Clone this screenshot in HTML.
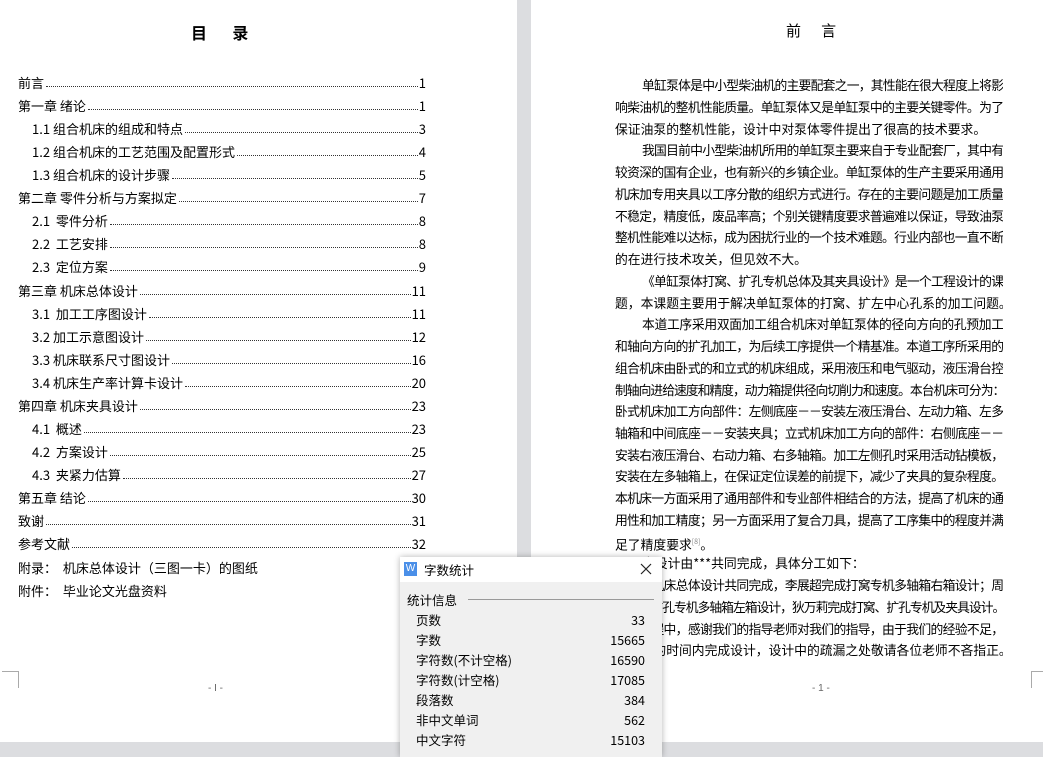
<!DOCTYPE html>
<html><head><meta charset="utf-8">
<style>
*{margin:0;padding:0;box-sizing:border-box}
body{width:1043px;height:757px;overflow:hidden;background:#dcdde0;position:relative;font-family:"Liberation Sans","Noto Sans CJK SC","WenQuanYi Zen Hei",sans-serif;color:#000}
.page{position:absolute;background:#fff;top:0;height:742px}
.t{position:absolute;white-space:nowrap}
.toc{position:absolute;left:18px;width:408px;display:flex;align-items:flex-end;font-size:13px;height:16px;line-height:16px;font-family:"Noto Sans CJK SC","WenQuanYi Zen Hei",sans-serif;white-space:nowrap}
.toc .d{flex:1;border-bottom:1px dotted #333;margin:0 1px 4px 2px}
.toc.s{left:32px;width:394px}
.ln{position:absolute;left:615px;width:388px;font-size:12.8px;letter-spacing:-1px;height:18px;line-height:18px;text-align:justify;text-align-last:justify;white-space:nowrap;overflow:hidden;font-family:"Noto Sans CJK SC","WenQuanYi Zen Hei",sans-serif}
.ln.l{text-align-last:left;letter-spacing:0}
.ln.i{padding-left:27px}
.dlg{position:absolute;left:400px;top:557px;width:262px;height:200px;background:#f0f0f0;box-shadow:0 0 6px rgba(0,0,0,.3);font-size:12.5px;font-family:"Noto Sans CJK SC","WenQuanYi Zen Hei",sans-serif}
.row{position:absolute;left:16px;width:229px;display:flex;justify-content:space-between;height:18px;line-height:18px}
</style></head><body>
<div class="page" style="left:0;width:517px"></div>
<div class="page" style="left:531px;width:512px"></div>

<div class="t" style="left:191px;top:20px;font-size:16px;font-weight:bold;font-family:'Noto Sans CJK SC',sans-serif">目&nbsp;&nbsp;&nbsp;&nbsp;&nbsp;&nbsp;&nbsp;录</div>

<div class="toc" style="top:75px"><span>前言</span><span class="d"></span><span>1</span></div>
<div class="toc" style="top:98px"><span>第一章 绪论</span><span class="d"></span><span>1</span></div>
<div class="toc s" style="top:121px"><span>1.1 组合机床的组成和特点</span><span class="d"></span><span>3</span></div>
<div class="toc s" style="top:144px"><span>1.2 组合机床的工艺范围及配置形式</span><span class="d"></span><span>4</span></div>
<div class="toc s" style="top:167px"><span>1.3 组合机床的设计步骤</span><span class="d"></span><span>5</span></div>
<div class="toc" style="top:190px"><span>第二章 零件分析与方案拟定</span><span class="d"></span><span>7</span></div>
<div class="toc s" style="top:213px"><span>2.1&nbsp; 零件分析</span><span class="d"></span><span>8</span></div>
<div class="toc s" style="top:236px"><span>2.2&nbsp; 工艺安排</span><span class="d"></span><span>8</span></div>
<div class="toc s" style="top:259px"><span>2.3&nbsp; 定位方案</span><span class="d"></span><span>9</span></div>
<div class="toc" style="top:283px"><span>第三章 机床总体设计</span><span class="d"></span><span>11</span></div>
<div class="toc s" style="top:306px"><span>3.1&nbsp; 加工工序图设计</span><span class="d"></span><span>11</span></div>
<div class="toc s" style="top:329px"><span>3.2 加工示意图设计</span><span class="d"></span><span>12</span></div>
<div class="toc s" style="top:352px"><span>3.3 机床联系尺寸图设计</span><span class="d"></span><span>16</span></div>
<div class="toc s" style="top:375px"><span>3.4 机床生产率计算卡设计</span><span class="d"></span><span>20</span></div>
<div class="toc" style="top:398px"><span>第四章 机床夹具设计</span><span class="d"></span><span>23</span></div>
<div class="toc s" style="top:421px"><span>4.1&nbsp; 概述</span><span class="d"></span><span>23</span></div>
<div class="toc s" style="top:444px"><span>4.2&nbsp; 方案设计</span><span class="d"></span><span>25</span></div>
<div class="toc s" style="top:467px"><span>4.3&nbsp; 夹紧力估算</span><span class="d"></span><span>27</span></div>
<div class="toc" style="top:490px"><span>第五章 结论</span><span class="d"></span><span>30</span></div>
<div class="toc" style="top:513px"><span>致谢</span><span class="d"></span><span>31</span></div>
<div class="toc" style="top:536px"><span>参考文献</span><span class="d"></span><span>32</span></div>
<div class="toc" style="top:560px"><span>附录：&nbsp; 机床总体设计（三图一卡）的图纸</span></div>
<div class="toc" style="top:583px"><span>附件：&nbsp; 毕业论文光盘资料</span></div>

<div style="position:absolute;left:2px;top:671px;width:17px;height:17px;border-top:1px solid #aaa;border-right:1px solid #aaa"></div>
<div class="t" style="left:208px;top:683px;font-size:10px;color:#666">- I -</div>
<div style="position:absolute;left:1031px;top:671px;width:12px;height:17px;border-top:1px solid #aaa;border-left:1px solid #aaa"></div>
<div class="t" style="left:812px;top:683px;font-size:10px;color:#666">- 1 -</div>

<div class="t" style="left:786px;top:20px;font-size:15px;font-family:'Noto Sans CJK SC',sans-serif">前&nbsp;&nbsp;&nbsp;&nbsp;&nbsp;&nbsp;言</div>

<div class="ln i" style="top:76px">单缸泵体是中小型柴油机的主要配套之一，其性能在很大程度上将影</div>
<div class="ln" style="top:98px">响柴油机的整机性能质量。单缸泵体又是单缸泵中的主要关键零件。为了</div>
<div class="ln l" style="top:120px">保证油泵的整机性能，设计中对泵体零件提出了很高的技术要求。</div>
<div class="ln i" style="top:141px">我国目前中小型柴油机所用的单缸泵主要来自于专业配套厂，其中有</div>
<div class="ln" style="top:163px">较资深的国有企业，也有新兴的乡镇企业。单缸泵体的生产主要采用通用</div>
<div class="ln" style="top:185px">机床加专用夹具以工序分散的组织方式进行。存在的主要问题是加工质量</div>
<div class="ln" style="top:207px">不稳定，精度低，废品率高；个别关键精度要求普遍难以保证，导致油泵</div>
<div class="ln" style="top:228px">整机性能难以达标，成为困扰行业的一个技术难题。行业内部也一直不断</div>
<div class="ln l" style="top:250px">的在进行技术攻关，但见效不大。</div>
<div class="ln i" style="top:272px">《单缸泵体打窝、扩孔专机总体及其夹具设计》是一个工程设计的课</div>
<div class="ln l" style="top:294px">题，本课题主要用于解决单缸泵体的打窝、扩左中心孔系的加工问题。</div>
<div class="ln i" style="top:315px">本道工序采用双面加工组合机床对单缸泵体的径向方向的孔预加工</div>
<div class="ln" style="top:337px">和轴向方向的扩孔加工，为后续工序提供一个精基准。本道工序所采用的</div>
<div class="ln" style="top:359px">组合机床由卧式的和立式的机床组成，采用液压和电气驱动，液压滑台控</div>
<div class="ln" style="top:381px">制轴向进给速度和精度，动力箱提供径向切削力和速度。本台机床可分为：</div>
<div class="ln" style="top:402px">卧式机床加工方向部件：左侧底座－－安装左液压滑台、左动力箱、左多</div>
<div class="ln" style="top:424px">轴箱和中间底座－－安装夹具；立式机床加工方向的部件：右侧底座－－</div>
<div class="ln" style="top:446px">安装右液压滑台、右动力箱、右多轴箱。加工左侧孔时采用活动钻模板，</div>
<div class="ln" style="top:467px">安装在左多轴箱上，在保证定位误差的前提下，减少了夹具的复杂程度。</div>
<div class="ln" style="top:489px">本机床一方面采用了通用部件和专业部件相结合的方法，提高了机床的通</div>
<div class="ln" style="top:511px">用性和加工精度；另一方面采用了复合刀具，提高了工序集中的程度并满</div>
<div class="ln l" style="top:533px">足了精度要求<sup style="font-size:7px;color:#888">[8]</sup>。</div>
<div class="ln l i" style="top:554px">本设计由***共同完成，具体分工如下：</div>
<div class="ln" style="top:576px">三人对机床总体设计共同完成，李展超完成打窝专机多轴箱右箱设计；周</div>
<div class="ln" style="top:598px">某完成扩孔专机多轴箱左箱设计，狄万莉完成打窝、扩孔专机及夹具设计。</div>
<div class="ln" style="top:620px">设计过程中，感谢我们的指导老师对我们的指导，由于我们的经验不足，</div>
<div class="ln l" style="top:641px">在有限的时间内完成设计，设计中的疏漏之处敬请各位老师不吝指正。</div>

<div class="dlg">
  <div style="position:absolute;left:0;top:0;width:262px;height:25px;background:#fff"></div>
  <div style="position:absolute;left:4px;top:5px;width:13px;height:14px;background:#4a8fe8;color:#fff;font-size:10px;line-height:14px;text-align:center;font-family:'Liberation Sans',sans-serif">W</div>
  <div class="t" style="left:24px;top:3px;font-size:12.5px">字数统计</div>
  <svg style="position:absolute;left:240px;top:6px" width="12" height="12" viewBox="0 0 12 12"><path d="M1 1L11 11M11 1L1 11" stroke="#222" stroke-width="1.2"/></svg>
  <div class="t" style="left:7px;top:33px">统计信息</div>
  <div style="position:absolute;left:68px;top:42px;width:186px;border-top:1px solid #999"></div>
  <div class="row" style="top:54px"><span>页数</span><span>33</span></div>
  <div class="row" style="top:74px"><span>字数</span><span>15665</span></div>
  <div class="row" style="top:94px"><span>字符数(不计空格)</span><span>16590</span></div>
  <div class="row" style="top:114px"><span>字符数(计空格)</span><span>17085</span></div>
  <div class="row" style="top:134px"><span>段落数</span><span>384</span></div>
  <div class="row" style="top:154px"><span>非中文单词</span><span>562</span></div>
  <div class="row" style="top:174px"><span>中文字符</span><span>15103</span></div>
</div>
</body></html>
